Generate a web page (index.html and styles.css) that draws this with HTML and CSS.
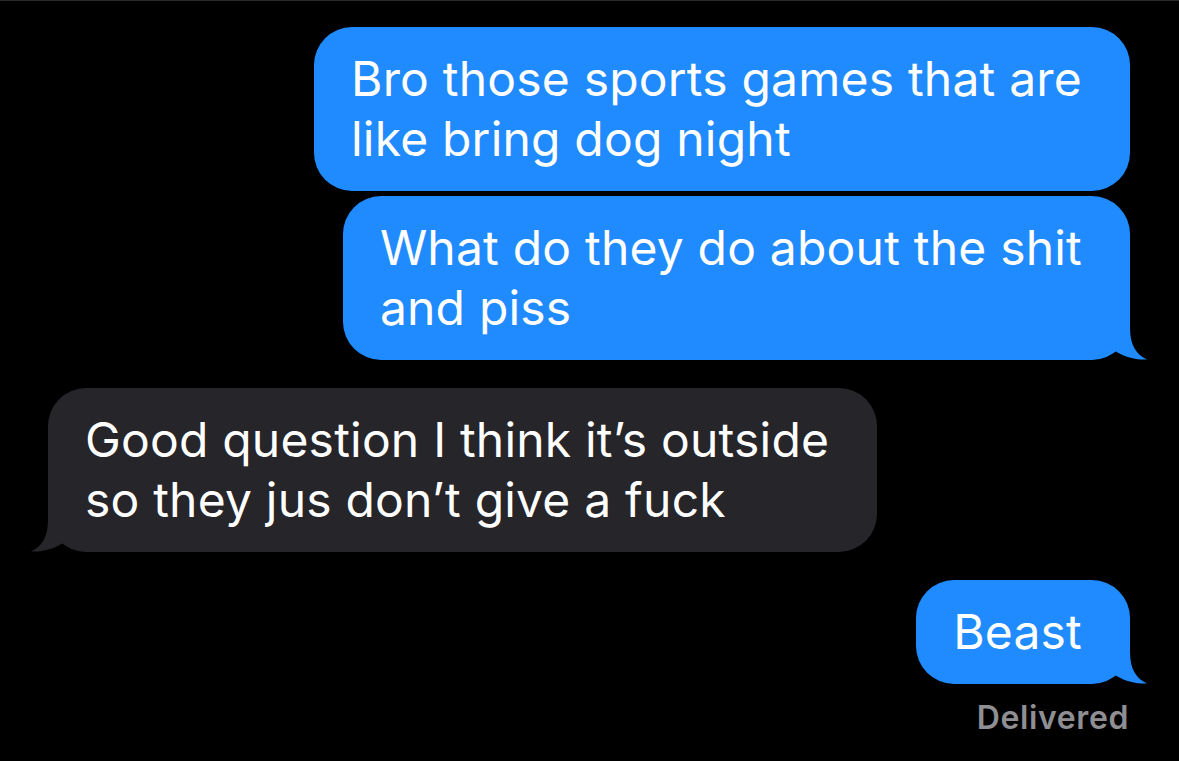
FILE: index.html
```html
<!DOCTYPE html>
<html lang="en">
<head>
<meta charset="utf-8">
<title>Messages</title>
<link rel="stylesheet" href="styles.css">
</head>
<body>
<main class="thread">
  <div class="row sent">
    <div class="bubble sent-bubble">Bro those sports games that are<br>like bring dog night</div>
  </div>
  <div class="row sent tight">
    <div class="bubble sent-bubble">What do they do about the shit<br>and piss
      <svg class="tail tail-right" viewBox="0 0 70 50" width="70" height="50" aria-hidden="true"><path d="M0 0H50V18C50 36 57 45 67 49.5C55 50 42 46.5 32 39C24 46 14 50 0 50Z"/></svg>
    </div>
  </div>
  <div class="row received">
    <div class="bubble recv-bubble">Good question I think it’s outside<br>so they jus don’t give a fuck
      <svg class="tail tail-left" viewBox="0 0 70 50" width="70" height="50" aria-hidden="true"><path d="M70 0H20V18C20 36 13 45 3 49.5C15 50 28 46.5 38 39C46 46 56 50 70 50Z"/></svg>
    </div>
  </div>
  <div class="row sent">
    <div class="bubble sent-bubble">Beast
      <svg class="tail tail-right" viewBox="0 0 70 50" width="70" height="50" aria-hidden="true"><path d="M0 0H50V18C50 36 57 45 67 49.5C55 50 42 46.5 32 39C24 46 14 50 0 50Z"/></svg>
    </div>
  </div>
  <div class="status">Delivered</div>
</main>
</body>
</html>
```
FILE: styles.css
```css
html, body {
  margin: 0;
  padding: 0;
  background: #000;
}

body {
  font-family: Inter, "Noto Sans", "Liberation Sans", sans-serif;
  -webkit-font-smoothing: antialiased;
}

.thread {
  min-height: 760px;
  border-top: 1px solid #2a2a2c;
  padding: 26px 49px 0 48px;
  display: flex;
  flex-direction: column;
}

.row {
  display: flex;
  margin-top: 28px;
}

.row:first-child {
  margin-top: 0;
}

.row.tight {
  margin-top: 5px;
}

.sent {
  justify-content: flex-end;
}

.received {
  justify-content: flex-start;
}

/* isolation keeps the tail (z-index -1) above the fill but under the text */
.bubble {
  position: relative;
  isolation: isolate;
  padding: 22px 48px 22px 37px;
  border-radius: 38px;
  font-size: 48px;
  line-height: 60px;
  letter-spacing: 0.2px;
  color: #fff;
  white-space: nowrap;
}

.sent-bubble {
  background: #1f8bff;
}

.recv-bubble {
  background: #26252a;
}

.tail {
  position: absolute;
  bottom: 0;
  z-index: -1;
  display: block;
}

.tail-right {
  right: -20px;
  fill: #1f8bff;
}

.tail-left {
  left: -20px;
  fill: #26252a;
}

.status {
  align-self: flex-end;
  margin-top: 17px;
  margin-right: 1px;
  font-size: 32px;
  line-height: 34px;
  letter-spacing: 0.6px;
  font-weight: 600;
  color: #8e8e93;
}
```
